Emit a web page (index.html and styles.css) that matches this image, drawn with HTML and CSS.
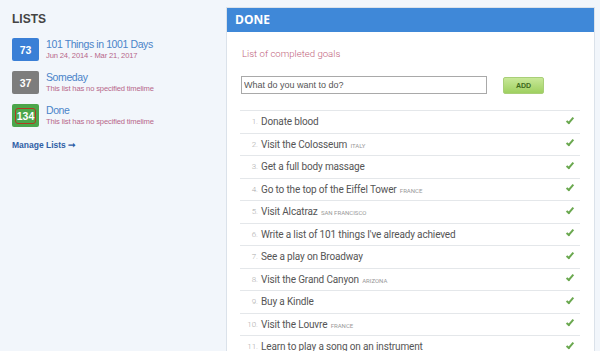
FILE: index.html
```html
<!DOCTYPE html>
<html lang="en">
	<head>
		<meta charset="UTF-8" />
		<title>Lists - Done</title>
		<link rel="stylesheet" href="styles.css">
	</head>
	<body>
		<div class="page">
			<div class="sidebar">
				<h2>LISTS</h2>
				<div class="list-item">
					<span class="badge blue">73</span>
					<div class="info">
						<a class="title" href="#">101 Things in 1001 Days</a>
						<span class="meta">Jun 24, 2014 - Mar 21, 2017</span>
					</div>
				</div>
				<div class="list-item">
					<span class="badge gray">37</span>
					<div class="info">
						<a class="title" href="#">Someday</a>
						<span class="meta">This list has no specified timelime</span>
					</div>
				</div>
				<div class="list-item">
					<span class="badge green"><span class="circled">134</span></span>
					<div class="info">
						<a class="title" href="#">Done</a>
						<span class="meta">This list has no specified timelime</span>
					</div>
				</div>
				<a class="manage" href="#">Manage Lists &#10142;</a>
			</div>

			<div class="panel">
				<div class="panel-header">DONE</div>
				<div class="panel-body">
					<p class="subtitle">List of completed goals</p>
					<div class="add-form">
						<input type="text" placeholder="What do you want to do?" />
						<button class="btn-add">ADD</button>
					</div>
					<ol class="goals">
						<li><span class="num">1.</span><span class="text">Donate blood</span><span class="check"></span></li>
						<li><span class="num">2.</span><span class="text">Visit the Colosseum <span class="tag">Italy</span></span><span class="check"></span></li>
						<li><span class="num">3.</span><span class="text">Get a full body massage</span><span class="check"></span></li>
						<li><span class="num">4.</span><span class="text">Go to the top of the Eiffel Tower <span class="tag">France</span></span><span class="check"></span></li>
						<li><span class="num">5.</span><span class="text">Visit Alcatraz <span class="tag">San Francisco</span></span><span class="check"></span></li>
						<li><span class="num">6.</span><span class="text">Write a list of 101 things I've already achieved</span><span class="check"></span></li>
						<li><span class="num">7.</span><span class="text">See a play on Broadway</span><span class="check"></span></li>
						<li><span class="num">8.</span><span class="text">Visit the Grand Canyon <span class="tag">Arizona</span></span><span class="check"></span></li>
						<li><span class="num">9.</span><span class="text">Buy a Kindle</span><span class="check"></span></li>
						<li><span class="num">10.</span><span class="text">Visit the Louvre <span class="tag">France</span></span><span class="check"></span></li>
						<li><span class="num">11.</span><span class="text">Learn to play a song on an instrument</span><span class="check"></span></li>
					</ol>
				</div>
			</div>
		</div>
	</body>
</html>
```

FILE: styles.css
```css
* {
	margin: 0;
	padding: 0;
	box-sizing: border-box;
}

body {
	background-color: #f2f6fb;
	font-family: "Open Sans", sans-serif;
	height: 351px;
	overflow: hidden;
}

.page {
	display: flex;
	align-items: flex-start;
}

/* sidebar */

.sidebar {
	width: 226px;
	padding: 12px 0 0 12px;
	display: flex;
	flex-direction: column;
}

h2 {
	font-family: "Liberation Sans", sans-serif;
	font-size: 12px;
	font-weight: 700;
	color: #444;
	line-height: 14px;
	margin-bottom: 12px;
}

.list-item {
	display: flex;
	align-items: flex-start;
	gap: 7px;
	height: 33px;
}

.badge {
	width: 27px;
	height: 23px;
	border-radius: 2px;
	color: white;
	font-family: "Liberation Sans", sans-serif;
	font-weight: 700;
	font-size: 10.5px;
	display: flex;
	align-items: center;
	justify-content: center;
}

.blue {
	background-color: #3a7fd6;
}

.gray {
	background-color: #7d7d7d;
}

.green {
	background-color: #4ba64a;
}

.circled {
	border: 1.5px solid #b23a22;
	border-radius: 3px;
	padding: 1px 1px;
	line-height: 12px;
}

.info {
	display: flex;
	flex-direction: column;
	margin-top: 0;
}

.title {
	color: #4a84c9;
	font-family: "Liberation Sans", sans-serif;
	font-size: 10.5px;
	letter-spacing: -0.4px;
	line-height: 13px;
	text-decoration: none;
}

.meta {
	color: #b7678a;
	font-family: "Liberation Sans", sans-serif;
	font-size: 7.6px;
	line-height: 10px;
	letter-spacing: -0.15px;
}

.manage {
	margin-top: 3px;
	color: #2f5ea6;
	font-family: "Liberation Sans", sans-serif;
	font-size: 8.5px;
	font-weight: 700;
	text-decoration: none;
}

/* panel */

.panel {
	width: 369px;
	margin-top: 7px;
	background: white;
	border: 1px solid #dbe2ea;
	border-bottom: none;
}

.panel-header {
	background-color: #3f88d8;
	color: white;
	font-size: 12px;
	font-weight: 700;
	height: 24px;
	line-height: 24px;
	padding-left: 8px;
}

.panel-body {
	padding: 14px 14px 0 13px;
}

.subtitle {
	font-family: "Roboto", sans-serif;
	font-weight: 300;
	font-size: 9.6px;
	line-height: 16px;
	color: #c0607a;
	margin-left: 2px;
	margin-bottom: 14px;
}

.add-form {
	display: flex;
	align-items: center;
	gap: 16px;
	margin-left: 1px;
	margin-bottom: 16px;
}

input {
	width: 246px;
	height: 18px;
	border: 1px solid #a9a9a9;
	padding: 0 2px;
	font-family: "Liberation Sans", sans-serif;
	font-size: 9px;
}

input::placeholder {
	color: #555;
}

.btn-add {
	width: 41px;
	height: 17px;
	border: 1px solid #a9cf78;
	border-radius: 2px;
	background: linear-gradient(#c8e898, #9fd060);
	color: #3e6a1c;
	font-family: "Liberation Sans", sans-serif;
	font-size: 7px;
	font-weight: 700;
}

.goals {
	list-style: none;
	border-top: 1px solid #e4e7ea;
}

.goals li {
	height: 22.5px;
	border-bottom: 1px solid #e4e7ea;
	display: flex;
	align-items: center;
	font-family: "Roboto", sans-serif;
}

.num {
	width: 18px;
	text-align: right;
	font-size: 8px;
	color: #aaa;
	font-weight: 300;
	margin-right: 3px;
}

.text {
	flex: 1;
	font-size: 10px;
	letter-spacing: -0.15px;
	color: #555;
}

.tag {
	font-size: 6px;
	letter-spacing: 0;
	color: #999;
	text-transform: uppercase;
	margin-left: 1px;
}

.check {
	width: 4px;
	height: 8px;
	border-right: 2px solid #6aa84f;
	border-bottom: 2px solid #6aa84f;
	transform: rotate(40deg);
	margin-right: 8px;
	margin-top: -4px;
}
```
